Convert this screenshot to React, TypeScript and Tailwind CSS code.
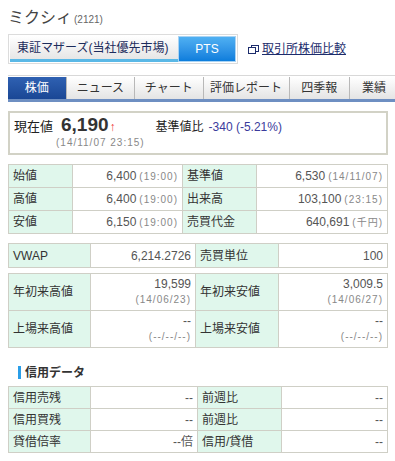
const jp = "font-['Liberation_Sans','Noto_Sans_CJK_JP',sans-serif]";

function Sub({ children }: { children: React.ReactNode }) {
  return <span className="ml-[3px] text-[10px] tracking-[1px] text-[#888]">{children}</span>;
}

const label = "border border-[#cfcfc6] bg-[#e0f7ec] px-[4px] text-left font-normal text-[#333]";
const value = "border border-[#cfcfc6] bg-white px-[4px] text-right text-[#555]";

export default function App() {
  return (
    <div className={`${jp} w-[395px] h-[461px] overflow-hidden bg-white px-2 text-[12px] text-[#333]`}>
      <div className="flex items-baseline pt-[6px] h-[34px]">
        <span className="text-[16px] text-[#444]">ミクシィ</span>
        <span className="ml-[2px] text-[10px] text-[#666]">(2121)</span>
      </div>

      <div className="flex items-center">
        <div className="flex border border-[#dcdcdc] p-px">
          <div className="flex h-[26px] w-[168px] items-center border-b-[3px] border-[#5ab8e6] bg-gradient-to-b from-white to-[#e6e6e6] pl-[7px] text-[12px] text-[#1c2c5c]">
            東証マザーズ(当社優先市場)
          </div>
          <div className="flex h-[26px] w-[58px] items-center justify-center border border-[#a9d3f3] bg-gradient-to-b from-[#4fb0f2] to-[#0b7ddc] text-[12px] text-white">
            PTS
          </div>
        </div>
        <div className="ml-[10px] flex items-center text-[12px] text-[#1c2c6c]">
          <svg width="11" height="9" viewBox="0 0 11 9" className="mr-[3px]">
            <rect x="3.5" y="0.5" width="7" height="6" fill="none" stroke="#1c2c6c" />
            <rect x="0.5" y="2.5" width="7" height="6" fill="white" stroke="#1c2c6c" />
          </svg>
          <span className="underline">取引所株価比較</span>
        </div>
      </div>

      <div className="mt-[11px] w-[390px] border-t border-[#d8d8d8] pt-px">
        <div className="flex h-[22px] text-[12px]">
          <div className="flex w-[59px] items-center justify-center bg-gradient-to-b from-[#2f61b2] to-[#1a4795] text-white">株価</div>
          {[
            ["ニュース", "w-[70px]"],
            ["チャート", "w-[70px]"],
            ["評価レポート", "w-[88px]"],
            ["四季報", "w-[62px]"],
            ["業績", "w-[50px]"],
          ].map(([t, w]) => (
            <div
              key={t}
              className={`flex ${w} items-center justify-center border-l border-[#b8b8b8] bg-gradient-to-b from-white to-[#e4e4e4] text-[#333]`}
            >
              {t}
            </div>
          ))}
        </div>
        <div className="h-[3px] bg-[#6e8fc2]" />
      </div>

      <div className="mt-[9px] h-[44px] w-[380px] border-2 border-[#d2d2c6] pl-[4px] pt-px">
        <div className="flex h-[22px] items-baseline leading-[22px]">
          <span className="w-[47px] text-[13px] text-[#222]">現在値</span>
          <span className="text-[19px] font-bold text-[#333]">6,190</span>
          <span className="ml-px text-[12px] text-[#e33]">↑</span>
          <span className="ml-[40px] text-[12px] text-[#222]">基準値比</span>
          <span className="ml-[5px] text-[12px] text-[#3b3b9c]">-340 (-5.21%)</span>
        </div>
        <div className="pl-[42px] text-[10px] leading-[13px] tracking-[1px] text-[#888]">(14/11/07 23:15)</div>
      </div>

      <table className="mt-[9px] w-[380px] table-fixed border-collapse">
        <colgroup>
          <col className="w-[64px]" />
          <col className="w-[110px]" />
          <col className="w-[74px]" />
          <col />
        </colgroup>
        <tbody>
          {[
            ["始値", "6,400", "(19:00)", "基準値", "6,530", "(14/11/07)"],
            ["高値", "6,400", "(19:00)", "出来高", "103,100", "(23:15)"],
            ["安値", "6,150", "(19:00)", "売買代金", "640,691", "(千円)"],
          ].map((r) => (
            <tr key={r[0]} className="h-[23px]">
              <td className={label}>{r[0]}</td>
              <td className={value}>{r[1]}<Sub>{r[2]}</Sub></td>
              <td className={label}>{r[3]}</td>
              <td className={value}>{r[4]}<Sub>{r[5]}</Sub></td>
            </tr>
          ))}
        </tbody>
      </table>

      <table className="mt-[9px] w-[380px] table-fixed border-collapse">
        <colgroup>
          <col className="w-[82px]" />
          <col className="w-[105px]" />
          <col className="w-[83px]" />
          <col />
        </colgroup>
        <tbody>
          <tr className="h-[24px]">
            <td className={label}>VWAP</td>
            <td className={value}>6,214.2726</td>
            <td className={label}>売買単位</td>
            <td className={value}>100</td>
          </tr>
        </tbody>
      </table>

      <table className="mt-[5px] w-[380px] table-fixed border-collapse">
        <colgroup>
          <col className="w-[82px]" />
          <col className="w-[105px]" />
          <col className="w-[83px]" />
          <col />
        </colgroup>
        <tbody>
          {[
            ["年初来高値", "19,599", "(14/06/23)", "年初来安値", "3,009.5", "(14/06/27)"],
            ["上場来高値", "--", "(--/--/--)", "上場来安値", "--", "(--/--/--)"],
          ].map((r) => (
            <tr key={r[0]} className="h-[37px]">
              <td className={label}>{r[0]}</td>
              <td className={value}>
                <div className="leading-[16px]">{r[1]}</div>
                <div className="text-[10px] leading-[16px] tracking-[1px] text-[#888]">{r[2]}</div>
              </td>
              <td className={label}>{r[3]}</td>
              <td className={value}>
                <div className="leading-[16px]">{r[4]}</div>
                <div className="text-[10px] leading-[16px] tracking-[1px] text-[#888]">{r[5]}</div>
              </td>
            </tr>
          ))}
        </tbody>
      </table>

      <div className="mt-[18px] flex h-[13px] items-center pl-[10px]">
        <div className="h-[13px] w-[3px] bg-[#2a9ee8]" />
        <span className="ml-[4px] text-[12px] font-bold text-[#333]">信用データ</span>
      </div>

      <table className="mt-[7px] w-[380px] table-fixed border-collapse">
        <colgroup>
          <col className="w-[82px]" />
          <col className="w-[107px]" />
          <col className="w-[84px]" />
          <col />
        </colgroup>
        <tbody>
          {[
            ["信用売残", "--", "前週比", "--"],
            ["信用買残", "--", "前週比", "--"],
            ["貸借倍率", "--倍", "信用/貸借", "--"],
          ].map((r, i) => (
            <tr key={i} className="h-[22px]">
              <td className={label}>{r[0]}</td>
              <td className={value}>{r[1]}</td>
              <td className={label}>{r[2]}</td>
              <td className={value}>{r[3]}</td>
            </tr>
          ))}
        </tbody>
      </table>
    </div>
  );
}
